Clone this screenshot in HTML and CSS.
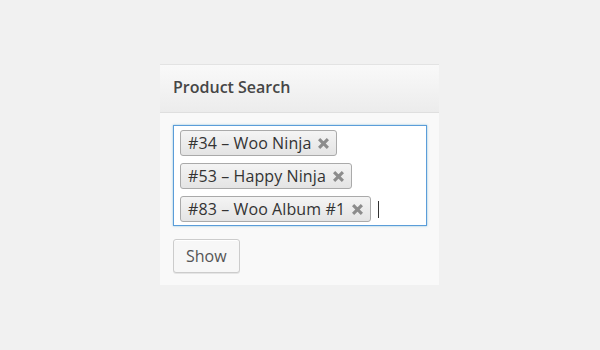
FILE: index.html
```html
<!DOCTYPE html>
<html lang="en">
<head>
  <meta charset="UTF-8" />
  <title>Product Search</title>
  <link rel="stylesheet" href="styles.css">
</head>
<body>
  <div class="widget">
    <div class="widget-title">
      <h3>Product Search</h3>
    </div>
    <div class="widget-body">
      <div class="chosen-box">
        <span class="tag">#34 – Woo Ninja
          <svg class="tag-x" viewBox="0 0 10 10"><path d="M1 1 L9 9 M9 1 L1 9" /></svg>
        </span>
        <span class="tag">#53 – Happy Ninja
          <svg class="tag-x" viewBox="0 0 10 10"><path d="M1 1 L9 9 M9 1 L1 9" /></svg>
        </span>
        <div class="tag-line">
          <span class="tag">#83 – Woo Album #1
            <svg class="tag-x" viewBox="0 0 10 10"><path d="M1 1 L9 9 M9 1 L1 9" /></svg>
          </span>
          <span class="caret"></span>
        </div>
      </div>
      <button class="btn">Show</button>
    </div>
  </div>
</body>
</html>
```

FILE: styles.css
```css
body {
  margin: 0;
  background: #f1f1f1;
  font-family: 'Open Sans', sans-serif;
  color: #333;
}

.widget {
  width: 279px;
  margin: 64px 0 0 160px;
  border-top: 1px solid #e3e3e3;
  background: #f9f9f9;
}

.widget-title {
  height: 48px;
  background: linear-gradient(to bottom, #f9f9f9, #ececec);
  border-bottom: 1px solid #dfdfdf;
  padding: 0 13px 3px;
  box-sizing: border-box;
  display: flex;
  align-items: center;
}

.widget-title h3 {
  margin: 0;
  font-size: 16px;
  font-weight: 600;
  color: #464646;
}

.widget-body {
  padding: 12px 12px 12px 13px;
  height: 148px;
}

.chosen-box {
  width: 254px;
  height: 101px;
  border: 1px solid #5b9dd9;
  background: #fff;
  box-shadow: 0 0 2px rgba(30, 140, 190, 0.5);
  padding: 4px 0 0 6px;
  box-sizing: border-box;
  display: flex;
  flex-direction: column;
  align-items: flex-start;
  gap: 7px;
}

.tag-line {
  display: flex;
  align-items: center;
  gap: 7px;
}

.tag {
  display: inline-flex;
  align-items: center;
  height: 26px;
  box-sizing: border-box;
  padding: 0 7px 0 7px;
  border: 1px solid #aaa;
  border-radius: 3px;
  background: linear-gradient(to bottom, #f4f4f4, #e4e4e4);
  font-size: 16px;
  letter-spacing: 0.1px;
  color: #333;
}

.tag-x {
  width: 11px;
  height: 11px;
  margin-left: 7px;
  stroke: #8c8c8c;
  stroke-width: 2.8;
  fill: none;
}

.caret {
  width: 1px;
  height: 17px;
  background: #333;
}

.btn {
  margin-top: 13px;
  height: 34px;
  padding: 0 12px;
  border: 1px solid #ccc;
  border-radius: 3px;
  background: #f7f7f7;
  box-shadow: 0 1px 0 #fff inset, 0 1px 0 rgba(0, 0, 0, 0.08);
  font-family: 'Open Sans', sans-serif;
  font-size: 16px;
  color: #555;
}
```
